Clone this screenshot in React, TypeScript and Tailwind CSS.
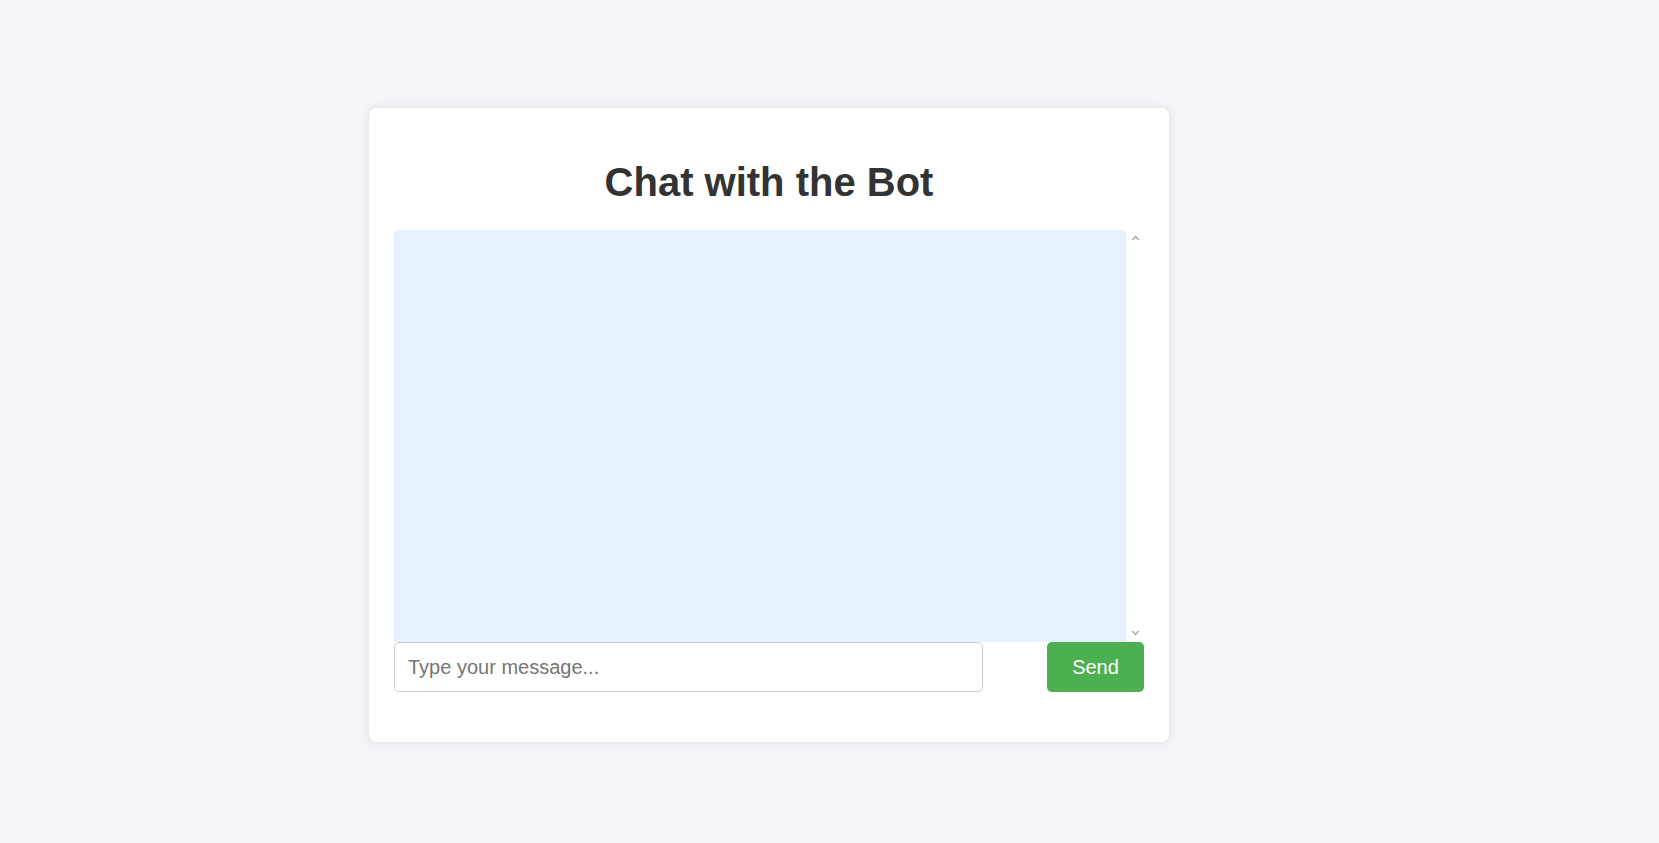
import { useState } from "react";

const Chevron = ({ up }: { up?: boolean }) => (
  <svg width="9" height="7" viewBox="0 0 9 7" className="block">
    <path
      d={up ? "M0.5 6 L4.5 1.5 L8.5 6 L6.8 6 L4.5 3.4 L2.2 6 Z" : "M0.5 1 L4.5 5.5 L8.5 1 L6.8 1 L4.5 3.6 L2.2 1 Z"}
      fill="#a0a0a0"
    />
  </svg>
);

const App = () => {
  const [message, setMessage] = useState("");

  return (
    <div className="min-h-[843px] w-full bg-[#f4f4f9] pt-[108px] pl-[369px] font-['Liberation_Sans',Arial,sans-serif]">
      <div className="w-[800px] rounded-[8px] bg-white px-[25px] pt-[51px] pb-[50px] shadow-[0_0_10px_rgba(0,0,0,0.1)]">
        <h1 className="mb-[25px] h-[46px] text-center text-[40px] leading-[46px] font-bold text-[#333]">
          Chat with the Bot
        </h1>

        <div className="flex h-[412px] w-[750px]">
          <div className="flex-1 rounded-t-[3px] bg-[#e6f2ff]" />
          <div className="flex w-[18px] flex-col items-center justify-between pt-[4px] pb-[5px]">
            <Chevron up />
            <Chevron />
          </div>
        </div>

        <div className="flex h-[50px] items-stretch justify-between">
          <input
            type="text"
            value={message}
            onChange={(e) => setMessage(e.target.value)}
            placeholder="Type your message..."
            className="w-[589px] rounded-[5px] border border-[#ccc] px-[13px] text-[20px] text-[#333] outline-none placeholder:text-[#757575]"
          />
          <button className="w-[97px] rounded-[5px] bg-[#4caf50] text-[20px] text-white">
            Send
          </button>
        </div>
      </div>
    </div>
  );
};

export default App;
